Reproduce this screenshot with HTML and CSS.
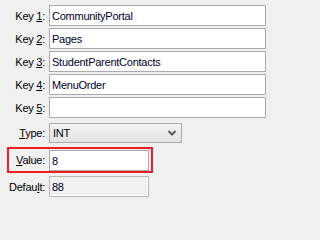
FILE: index.html
```html
<!DOCTYPE html>
<html>
<head>
<meta charset="utf-8">
<link rel="stylesheet" href="styles.css">
</head>
<body>
<div class="form">
  <div class="row"><label class="lbl">Key <u>1</u>:</label><div class="field wide">CommunityPortal</div></div>
  <div class="row"><label class="lbl">Key <u>2</u>:</label><div class="field wide">Pages</div></div>
  <div class="row"><label class="lbl">Key <u>3</u>:</label><div class="field wide">StudentParentContacts</div></div>
  <div class="row"><label class="lbl">Key <u>4</u>:</label><div class="field wide">MenuOrder</div></div>
  <div class="row"><label class="lbl">Key <u>5</u>:</label><div class="field wide"></div></div>
  <div class="row row-type"><label class="lbl"><u>T</u>ype:</label>
    <div class="select"><span>INT</span>
      <svg class="chev" width="8" height="6" viewBox="0 0 8 6"><path d="M0.5 1 L4 4.5 L7.5 1" fill="none" stroke="#5a5a5a" stroke-width="2"/></svg>
    </div>
  </div>
  <div class="row row-value"><label class="lbl lbl-value"><u>V</u>alue:</label><div class="field short">8</div></div>
  <div class="row row-default"><label class="lbl">Defau<u>l</u>t:</label><div class="field short readonly">88</div></div>
</div>
</body>
</html>
```
FILE: styles.css
```css
html, body {
  margin: 0;
  padding: 0;
  background: #f0f0f0;
}
body {
  width: 271px;
  height: 202px;
  overflow: hidden;
  font-family: "Liberation Sans", Arial, sans-serif;
  font-size: 11px;
  letter-spacing: -0.25px;
  color: #000;
}
.form {
  display: flex;
  flex-direction: column;
  gap: 2px;
  padding-top: 5px;
}
.row {
  display: flex;
  align-items: center;
}
.lbl {
  width: 45px;
  text-align: right;
  margin-right: 4px;
  flex: none;
  white-space: nowrap;
}
.field {
  box-sizing: border-box;
  height: 21px;
  border: 1px solid #ababab;
  background: #fff;
  padding: 0 2px;
  display: flex;
  align-items: center;
  color: #00002a;
  white-space: nowrap;
  overflow: hidden;
}
.wide { width: 217px; }
.short { width: 100px; }
.readonly {
  background: #f0f0f0;
  border-color: #b8b8b8;
  box-shadow: inset -1px -1px 0 #fff;
}
.row-type { margin-top: 3px; }
.select {
  box-sizing: border-box;
  width: 133px;
  height: 20px;
  border: 1px solid #acacac;
  background: linear-gradient(#f3f3f3, #e4e4e4);
  display: flex;
  align-items: center;
  justify-content: space-between;
  padding: 0 5px 0 3px;
}
.chev { display: block; }
.row-value {
  margin-top: 4px;
  margin-left: 9px;
  width: 142px;
  height: 22px;
  outline: 2px solid #ea1c24;
}
.row-value .lbl-value { width: 36px; }
.row-value .field { height: 21px; margin-top: 1px; }
.row-default { margin-top: 3px; }
u { text-decoration-thickness: 1px; text-underline-offset: 1px; }
```
